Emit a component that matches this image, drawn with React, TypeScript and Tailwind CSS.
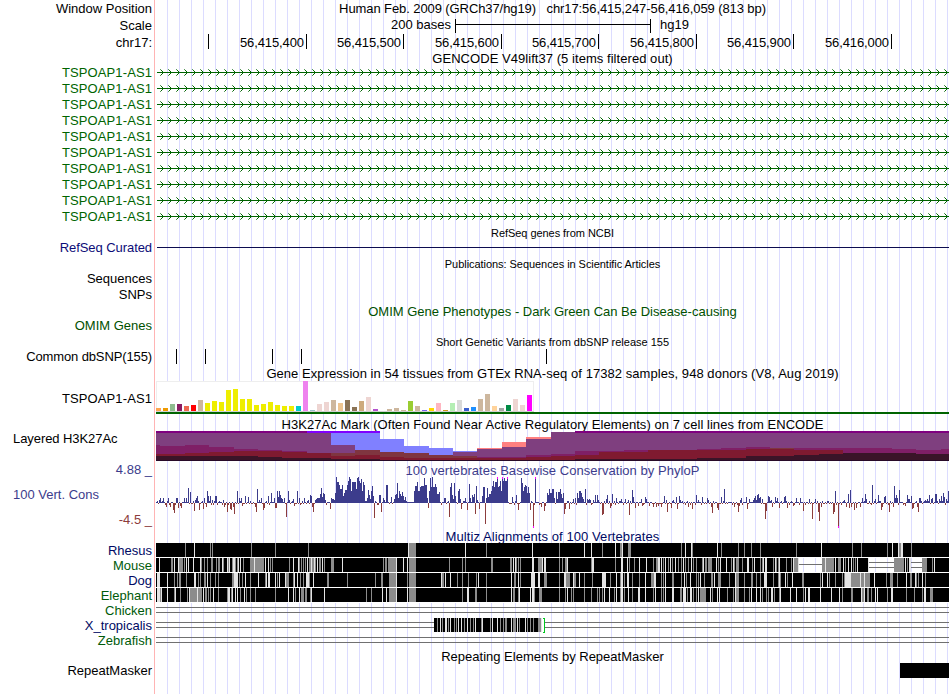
import type { ReactNode } from 'react';

const LEFT = 156;
const WIDTH = 793;

const GREEN = '#006400';

// ---- track data, positions are in track pixels ----

const snps = [176, 205, 272, 301, 546];

const rulerSteps = [
    { w: 'w-[98px]', text: '56,415,400' },
    { w: 'w-[97px]', text: '56,415,500' },
    { w: 'w-[98px]', text: '56,415,600' },
    { w: 'w-[97px]', text: '56,415,700' },
    { w: 'w-[98px]', text: '56,415,800' },
    { w: 'w-[97px]', text: '56,415,900' },
    { w: 'w-[98px]', text: '56,416,000' },
];

// height and colour of each GTEx tissue
const tissues =
    '3ffa54f 3ee9a00 78fbc8f 78b1c62 5ee6a50 6ff0000 11cdb79e 8eeee00 10eeee00 9eeee00 21eeee00 22eeee00 12eeee00 12eeee00 6eeee00 7eeee00 9eeee00 6eeee00 5eeee00 5eeee00 500cdcd 30ee82ee 19ac0cd 7eed5d2 9eed5d2 11cdb79e 8eec591 118b7355 48b7355 10cdaa7d 14eed5d2 2b452cd 0cdb79e 2cdb79e 3cdb79e 1cdb79e 109acd32 5cdb79e 17a67ee 3ffd700 8ffb6c1 1cd9b1d 8b4eeb4 11d9d9d9 33a5fcd 41e90ff 12cdb79e 17cdb79e 5ffd39b 3a6a6a6 6008b45 12eed5d2 6eed5d2 16ff00ff'
        .split(' ')
        .map((t) => ({ h: Number(t.slice(0, -6)), color: `#${t.slice(-6)}` }));

const P = '#7f3f7f';
const M = '#7f1f66';
const R = '#7f1a30';
const D = '#3a1428';
const B = '#8080ff';
const BR = '#7f3540';
const K = '#ff8080';
const LINE = '#7f007f';
const VIOLET = '#8000ff';

// each step: start x, then [top, colour] bands downwards
const histone: [number, [number, string][]][] = [
    [156, [[431, LINE], [433, P], [445, M], [454, R], [456, D]]],
    [160, [[431, LINE], [433, P], [446, M], [454, R], [456, D]]],
    [185, [[431, LINE], [433, P], [445, M], [453, R], [456, D]]],
    [209, [[431, LINE], [433, P], [447, M], [452, R], [456, D]]],
    [234, [[431, LINE], [433, P], [449, M], [451, R], [456, D]]],
    [258, [[431, LINE], [433, P], [450, M], [451, R], [457, D]]],
    [282, [[431, LINE], [433, P], [451, M], [452, R], [458, D]]],
    [307, [[431, VIOLET], [433, P], [453, R], [458, D]]],
    [331, [[431, VIOLET], [433, B], [445, P], [453, BR], [456, R], [459, D]]],
    [355, [[431, VIOLET], [433, B], [450, BR], [455, R], [459, D]]],
    [380, [[439, B], [452, BR], [457, R], [460, D]]],
    [404, [[446, B], [453, BR], [458, R], [460, D]]],
    [429, [[448, B], [455, BR], [458, R], [460, D]]],
    [453, [[451, B], [452, P], [456, BR], [458, R], [460, D]]],
    [477, [[448, K], [449, P], [457, M], [458, R], [460, D]]],
    [502, [[442, K], [447, P], [457, M], [458, R], [460, D]]],
    [526, [[437, K], [439, P], [455, M], [457, R], [460, D]]],
    [551, [[432, P], [454, M], [456, R], [460, D]]],
    [575, [[431, LINE], [433, P], [451, M], [455, R], [459, D]]],
    [599, [[431, LINE], [433, P], [451, M], [452, R], [459, D]]],
    [624, [[431, LINE], [433, P], [450, M], [452, R], [459, D]]],
    [648, [[431, LINE], [433, P], [450, R], [459, D]]],
    [697, [[431, LINE], [433, P], [449, M], [450, R], [458, D]]],
    [721, [[431, LINE], [433, P], [448, M], [450, R], [458, D]]],
    [746, [[431, LINE], [433, P], [447, M], [449, R], [456, D]]],
    [770, [[431, LINE], [433, P], [448, BR], [449, R], [456, D]]],
    [794, [[431, LINE], [433, P], [448, M], [450, R], [455, D]]],
    [819, [[431, LINE], [433, P], [448, M], [450, R], [454, D]]],
    [843, [[431, LINE], [433, P], [448, M], [453, D]]],
    [892, [[431, LINE], [433, P], [449, M], [453, D]]],
    [916, [[431, LINE], [433, P], [450, M], [454, D]]],
    [941, [[431, LINE], [433, P], [449, M], [454, D]]],
];

// x:score pairs, bases that are not listed have a score near zero
const conserved = `159:3 160:5 163:5 168:5 170:2 176:5 177:5 184:5 186:5 188:15 190:11 195:3 196:5 197:7 202:2 204:5 207:12 208:7 210:7 212:3
215:7 216:7 223:3 237:12 239:5 241:5 245:7 248:6 250:2 257:14 259:3 261:5 268:7 271:10 274:5 277:12 278:6 279:12 280:8 281:5 282:4 284:5 288:12 289:3
293:4 297:12 299:5 304:5 308:3 310:8 311:7 315:3 316:4 317:5 318:5 319:5 320:9 321:15 322:6 323:10 324:9 325:3 331:5 332:4 333:4 334:3 335:10 336:26 337:21
338:21 339:18 340:14 341:14 342:18 343:7 344:10 345:13 346:13 347:18 348:22 349:26 350:24 351:12 352:21 353:21 354:21 355:21 356:14 357:25 358:26 359:22 360:20
361:24 362:12 363:21 364:18 366:2 367:5 368:13 369:8 370:4 371:12 372:17 373:7 379:8 380:8 383:5 384:3 386:18 387:18 391:6 394:4 395:8 396:9 397:20 398:5
399:12 400:9 401:7 402:11 403:7 404:3 405:6 407:1 408:1 409:1 410:1 411:1 412:1 413:1 414:12 415:17 416:17 417:21 418:12 419:12 420:16 421:17 422:17 423:17
424:25 425:18 426:18 427:5 429:12 430:25 431:16 432:26 433:16 434:16 435:19 436:16 437:9 438:9 439:11 444:5 445:5 450:16 451:20 452:8 453:4 454:20 455:7
458:12 459:14 460:4 465:5 469:19 470:5 472:8 473:6 474:9 476:17 477:3 482:7 483:16 484:16 486:5 487:15 488:6 489:9 490:9 491:12 492:17 493:22 494:16
495:21 496:21 497:26 498:16 499:17 500:22 501:12 502:26 503:22 504:25 505:22 506:22 507:26 512:6 516:8 521:25 522:20 523:12 524:16 525:18 526:17 527:10
528:16 529:10 535:26 547:10 548:8 549:14 550:10 551:10 552:14 553:14 554:5 556:11 557:4 558:11 559:11 560:14 561:9 562:5 563:10 573:4 575:5 577:10 578:5
579:12 580:12 581:10 582:6 583:4 585:14 587:4 588:3 589:4 590:3 593:3 595:8 597:8 598:3 606:4 607:8 612:9 616:5 621:4 625:4 628:3 632:13 633:6 641:4 645:6
646:4 664:7 666:3 673:3 676:6 679:7 680:3 696:8 698:3 702:6 707:5 708:3 721:6 724:14 728:1 729:1 730:1 740:3 741:5 746:6 749:4 753:3 754:5 755:7 756:3 757:8
758:9 759:5 760:6 762:4 768:7 769:6 771:3 775:6 777:5 784:6 785:7 796:5 800:5 809:4 815:4 835:12 844:3 848:9 850:13 862:5 865:9 866:4 872:18 875:4 878:8
884:6 885:7 894:17 895:5 896:8 897:5 899:13 907:8 908:4 909:4 911:7 919:5 920:5 924:2 925:3 926:2 927:4 928:2 929:8 931:4 932:5 935:9 936:9 939:4 940:2 941:7
943:10 944:6 946:4 948:12 166:-4 169:-2 170:-4 173:-7 174:-10 178:-5 180:-3 181:-5 194:-8 199:-7 203:-6 206:-4 211:-2 213:-2 224:-4 225:-2 227:-9 228:-2
230:-6 231:-7 233:-4 234:-11 242:-3 255:-4 256:-9 263:-7 264:-5 275:-5 276:-5 286:-14 294:-3 300:-2 312:-4 313:-9 330:-6 374:-15 377:-2 381:-9 389:-1
428:-5 441:-2 449:-14 461:-6 467:-7 475:-11 479:-6 485:-21 510:-1 514:-2 518:-7 530:-7 533:-25 541:-4 544:-8 545:-3 564:-11 565:-6 569:-6 602:-12 603:-11
610:-5 611:-3 615:-2 623:-2 629:-12 635:-5 638:-3 642:-3 649:-3 653:-4 656:-4 658:-3 661:-4 667:-9 671:-5 677:-6 688:-4 692:-6 701:-2 711:-4 712:-10 717:-5
718:-7 734:-4 738:-9 739:-3 747:-6 765:-16 766:-8 772:-4 779:-5 787:-5 793:-3 803:-8 805:-2 812:-16 818:-9 819:-18 821:-4 833:-11 834:-9 838:-25 846:-4
849:-5 851:-4 854:-7 856:-5 860:-4 871:-2 881:-7 882:-4 889:-9 893:-4 905:-3 912:-6 913:-5 917:-4 918:-9`;

const scores = new Map(conserved.split(/\s+/).map((p) => p.split(':').map(Number) as [number, number]));
const nearZero = [1, -1, 1, 1, -1, 2, 1, -1, -2, 1, -1, 1, 2];

// position, g(rey) or l(ight), optional width
const rhesus = `185g 194l 210g 212g 251g 275g 308g 408l 409g7 465l 486g 532l 559g 584l 591l 602g 615l 620g2 622l 628g3 681g 685l 691l 692g 717l 721g 738g 744g 751g
760g 796g 821l 852g 861g 887g 892l 898l 899g2 901l2 911g`;
const mouse = `159l 171g2 174l 178l 179g4 184g 186l 188l 193l 200l 201g 204g 207g 211g2 216g 218g2 222l 223g 227l 228g 229l 232g 233l2 235g 237g 238l 240l 243g 250g4
254l 255g9 265l 268l 270g 272g 289g 293l 298l 299g 301g 303g 305g 307l 309g2 311l 312g2 314l 315g 317l 319g2 322l 324g 331g3 342l 383g 385g2 388g8 396l 403l
407l 409g7 449g 462g 465g 491g2 510g2 513l 515l 516g 518g 520g 532l2 538g4 542l 544l2 559g 562g 565g2 567l 591g 592l2 615g 621l2 627l 629g 634g 639l 646l 653g
656g2 658l2 661l 663g 665l 668g 670l 672g 675l 678g 681g 683l 685g 688g 691l 693g 696g 702g 703l 705g2 708g4 716l 718g 720l 726l 731g 733l 734g 736g3 742g
747l2 752g 754l 760g 762g 763l 765l2 773g 775l 776g 778g 779l 786g 791g 793l 794g4 798l 822g3 825l 826g8 835l 838g2 840g 843l 845g 848l 851l 853g 855g 857l
868l 894g9 903g 905l 907g 909l2 922g5 932g 934l`;
const dog = `157l3 167l 174g 177g 179g2 186g 194l2 198g 200g 204g2 207l 210g 215g 218g 232g2 234l4 239g 242g 245l 250g 258l 265g 266l 268l2 275l 277g 279l 285l 286g3
293g 294l 297l 300g 303g 306l 307l2 309g 313l 327g2 347g 375g 381g2 389g7 396l 407g 409g7 441l 442g2 445l 450l 457g 462g 468g 476g 478l 486g 511l 514g2 518l
520g 531l4 538l2 544g3 559g 564l2 566g4 573l 574g2 579l 584g 592g 602l 603l3 610g 616l 620g 621l2 624g 627l2 632g 639g 645l 651g3 654l2 661g 663g 665l 672g2
681g 684l 686g 690l 696g 698g 700l 704g 711g 712g 714l 718g3 729g 735l 736g3 744g 751g2 756g 760g 764l3 773g 778g 779l 780g 785l 787g 792l 802g2 820g 822l
827l 829g 835g 842g 844g 845l4 849l2 851g9 860l 861g3 864l 865g5 874l 886g 890g3 897g 906l 910g2 915l 916g 918g 922l 925g`;
const elephant = `157l3 160g 161l 167l 174g 175l 180g 187g 189l 190g7 197l 198g4 203l 205g2 208g 210g 213l 218g 227g 228l2 231g 232l 235l 237l 240g 244l 246g 250g 255g
275g 288l 293l 295g 299l 301g3 305g2 310g 311l 324l 366g 371g 382l 386l 389g7 396l 407l 409g7 462g 467l2 475g2 486g 511l 513g2 518g 519l 530l 532l2 534g 539g3
559g 565g 567l 571g 573g 584g 591g 597g 599g 602g 604l 609l 614g 616l 620g 621l2 624g 628l 632g 638l2 645l 653g 655l 661g 663g 665l 672l2 680g2 683l3 687g
690l2 693g 696g 698l 700g6 710l 712g 717l 719l 727g 733g 735l 736g3 744g 749g 751l 756l 760l 762g 766g 768g 771l2 774g 779g 780l 790l 796l 803g 805l 808l2
820l 831l 839l 842g 851g2 861l 862g2 864l 867g2 871g 875l 877l 887g 891l2 906g 914g 922g 924l2 930g3`;
const frog = `437g 440l 442g 445l2 448g 450l 454g 456g 458l 461l 464g 467l 470g 473g 475l 481g 482l 490g 492l 497l 500g 503g 505g2 511l 513g3 517l 519g 525l 527g 530g 533g 538g4 541l`;

type Block = { x: number; w: number; fill: string };

const parseBlocks = (text: string): Block[] =>
    text.split(/\s+/).map((t) => {
        const [, x, tone, w] = t.match(/(\d+)([gl])(\d*)/)!;
        return { x: Number(x), w: Number(w || 1), fill: tone === 'g' ? '#8c8c8c' : '#e4e4e4' };
    });

// ---- building blocks ----

function Track({ top, height, children }: { top: number; height: number; children?: ReactNode }) {
    return (
        <svg className="block" width={WIDTH} height={height} viewBox={`${LEFT} ${top} ${WIDTH} ${height}`} shapeRendering="crispEdges">
            {children}
        </svg>
    );
}

interface RowProps {
    height: string;
    label?: ReactNode;
    labelClass?: string;
    children?: ReactNode;
}

function Row({ height, label, labelClass = '', children }: RowProps) {
    return (
        <div className={`flex ${height}`}>
            <div className={`mr-px w-[155px] shrink-0 border-r border-[#ffb4b4] pr-[2px] text-right whitespace-pre ${labelClass}`}>{label}</div>
            <div className="w-[793px] shrink-0 bg-[repeating-linear-gradient(90deg,transparent_0px,transparent_11px,#dcdcff_11px,#dcdcff_12px)]">
                {children}
            </div>
        </div>
    );
}

function Title({ className = '', children }: { className?: string; children: ReactNode }) {
    return <div className={`text-center whitespace-pre ${className}`}>{children}</div>;
}

function GeneRow({ top }: { top: number }) {
    const y = top + 7;
    const arrows = Array.from({ length: 99 }, (_, i) => 162 + i * 8);
    return (
        <Row height="h-4" label="TSPOAP1-AS1" labelClass="tracking-[0.1px] text-[#006400]">
            <Track top={top} height={16}>
                <rect x={157} y={y} width={792} height={1} fill={GREEN} />
                {arrows.map((x) => (
                    <g key={x} fill={GREEN}>
                        <path d={`M${x} ${y - 1}h1v1h-1z M${x - 1} ${y - 2}h1v1h-1z M${x} ${y + 1}h1v1h-1z M${x - 1} ${y + 2}h1v1h-1z`} />
                        <path opacity={0.65} d={`M${x - 2} ${y - 3}h1v1h-1z M${x - 2} ${y + 3}h1v1h-1z`} />
                    </g>
                ))}
            </Track>
        </Row>
    );
}

function Expression() {
    return (
        <Track top={381} height={35}>
            <rect x={156} y={381} width={378} height={31} fill="#eeeeee" />
            <rect x={157} y={382} width={376} height={29} fill="#ffffff" />
            <rect x={156} y={411} width={378} height={1} fill="#d2d2d2" />
            {tissues.map((t, i) => (
                <rect key={i} x={156 + i * 7} y={411 - t.h} width={5} height={t.h} fill={t.color} />
            ))}
            <rect x={156} y={412} width={793} height={2} fill={GREEN} />
        </Track>
    );
}

function Histone() {
    return (
        <Track top={431} height={31}>
            {histone.map(([x, bands], i) => {
                const end = histone[i + 1]?.[0] ?? 949;
                return bands.map(([y, fill]) => <rect key={`${x}-${y}`} x={x} y={y} width={end - x} height={461 - y} fill={fill} />);
            })}
            <rect x={156} y={460} width={793} height={1} fill="#280a28" />
        </Track>
    );
}

function Conservation() {
    return (
        <Track top={477} height={52}>
            {Array.from({ length: WIDTH }, (_, i) => {
                const x = LEFT + i;
                const s = scores.get(x) ?? nearZero[(x * 31 + (x >> 2)) % nearZero.length];
                const clipped = s === -25 || [497, 502, 507, 535].includes(x);
                return (
                    <g key={x}>
                        <rect x={x} y={s > 0 ? 503 - s : 503} width={1} height={Math.abs(s)} fill={s > 0 ? '#3c3c8c' : '#8c3c3c'} />
                        {clipped && <rect x={x} y={s > 0 ? 477 : 526} width={1} height={2} fill="#ff00ff" />}
                    </g>
                );
            })}
        </Track>
    );
}

function Alignment({ top, data, gaps = false }: { top: number; data: string; gaps?: boolean }) {
    return (
        <Track top={top} height={15}>
            <rect x={156} y={top} width={793} height={15} fill="#ffffff" />
            <rect x={156} y={top} width={793} height={14} fill="#000000" />
            {parseBlocks(data).map((b) => (
                <rect key={b.x} x={b.x} y={top} width={b.w} height={14} fill={b.fill} />
            ))}
            {gaps && (
                <>
                    <path fill="#ffffff" d={`M799 ${top}h23v14h-23z M869 ${top}h25v14h-25z M911 ${top}h11v14h-11z`} />
                    <path fill="#dcdcff" d={`M803 ${top}h1v14h-1z M815 ${top}h1v14h-1z M875 ${top}h1v14h-1z M887 ${top}h1v14h-1z M911 ${top}h1v14h-1z`} />
                    <path
                        fill="#707070"
                        d={`M799 ${top + 6}h23v1h-23z M869 ${top + 4}h25v1h-25z M869 ${top + 9}h25v1h-25z M911 ${top + 4}h11v1h-11z M911 ${top + 9}h11v1h-11z`}
                    />
                </>
            )}
        </Track>
    );
}

function Unaligned({ top, children }: { top: number; children?: ReactNode }) {
    return (
        <Track top={top} height={15}>
            <rect x={156} y={top + 4} width={793} height={1} fill="#707070" />
            <rect x={156} y={top + 9} width={793} height={1} fill="#707070" />
            {children}
        </Track>
    );
}

export default function App() {
    return (
        <div className="h-[694px] w-[950px] overflow-hidden bg-white font-['Liberation_Sans',Arial,sans-serif] text-[13px] leading-[15px] text-black">
            <Row height="h-[17px]" label="Window Position" labelClass="pt-px">
                <Title className="pt-px tracking-[-0.09px]">{'Human Feb. 2009 (GRCh37/hg19)   chr17:56,415,247-56,416,059 (813 bp)'}</Title>
            </Row>
            <Row height="h-[17px]" label="Scale" labelClass="pt-px">
                <div className="flex">
                    <div className="w-[296px] pr-px text-right">200 bases</div>
                    <div className="mt-[2px] ml-[3px] flex h-[14px] w-[196px] items-start border-x border-black">
                        <div className="mt-[5px] h-px w-full bg-black" />
                    </div>
                    <div className="ml-[9px]">hg19</div>
                </div>
            </Row>
            <Row height="h-[17px]" label="chr17:" labelClass="pt-px">
                <div className="flex h-[15px]">
                    <div className="w-[53px] border-r border-black" />
                    {rulerSteps.map((s) => (
                        <div key={s.text} className={`shrink-0 border-r border-black pt-px pr-[2px] text-right tracking-[-0.1px] ${s.w}`}>
                            {s.text}
                        </div>
                    ))}
                </div>
            </Row>

            <Row height="h-[14px]">
                <Title className="tracking-[0.05px]">GENCODE V49lift37 (5 items filtered out)</Title>
            </Row>
            {Array.from({ length: 10 }, (_, i) => (
                <GeneRow key={i} top={65 + i * 16} />
            ))}

            <Row height="h-[15px]">
                <Title className="pt-px text-[11px] tracking-[-0.05px]">RefSeq genes from NCBI</Title>
            </Row>
            <Row height="h-4" label="RefSeq Curated" labelClass="tracking-[-0.07px] text-[#0c0c78]">
                <Track top={240} height={16}>
                    <rect x={157} y={247} width={792} height={1} fill="#0c0c50" />
                </Track>
            </Row>

            <Row height="h-[15px]">
                <Title className="pt-px text-[11px] tracking-[-0.05px]">Publications: Sequences in Scientific Articles</Title>
            </Row>
            <Row height="h-4" label="Sequences" />
            <Row height="h-4" label="SNPs" />

            <Row height="h-[15px]">
                <Title className="pt-px text-[#005000]">OMIM Gene Phenotypes - Dark Green Can Be Disease-causing</Title>
            </Row>
            <Row height="h-4" label="OMIM Genes" labelClass="text-[#005000]" />

            <Row height="h-[15px]">
                <Title className="pt-px text-[11px]">Short Genetic Variants from dbSNP release 155</Title>
            </Row>
            <Row height="h-4" label="Common dbSNP(155)" labelClass="tracking-[-0.12px]">
                <Track top={349} height={16}>
                    {snps.map((x) => (
                        <rect key={x} x={x} y={349} width={1} height={15} fill="#000000" />
                    ))}
                </Track>
            </Row>

            <Row height="h-4">
                <Title className="pt-px tracking-[0.055px]">Gene Expression in 54 tissues from GTEx RNA-seq of 17382 samples, 948 donors (V8, Aug 2019)</Title>
            </Row>
            <Row height="h-[35px]" label="TSPOAP1-AS1" labelClass="pt-[10px] tracking-[0.1px]">
                <Expression />
            </Row>

            <Row height="h-[15px]">
                <Title className="pt-px tracking-[0.05px]">H3K27Ac Mark (Often Found Near Active Regulatory Elements) on 7 cell lines from ENCODE</Title>
            </Row>
            <Row height="h-[31px]" label={<div className="pl-[13px] text-left tracking-[-0.07px]">Layered H3K27Ac</div>}>
                <Histone />
            </Row>

            <Row height="h-[15px]" label="4.88 _" labelClass="text-[#3c3c8c]">
                <Title className="pt-px tracking-[0.04px] text-[#3c3c8c]">100 vertebrates Basewise Conservation by PhyloP</Title>
            </Row>
            <Row
                height="h-[52px]"
                labelClass="flex flex-col pt-[10px]"
                label={
                    <>
                        <div className="pl-[13px] text-left text-[#3c3c8c]">100 Vert. Cons</div>
                        <div className="pt-[10px] text-[#8c3c3c]">-4.5 _</div>
                    </>
                }
            >
                <Conservation />
            </Row>

            <Row height="h-[14px]">
                <Title className="tracking-[0.08px] text-[#000a64]">Multiz Alignments of 100 Vertebrates</Title>
            </Row>
            <Row height="h-[15px]" label="Rhesus" labelClass="text-[#000a64]">
                <Alignment top={543} data={rhesus} />
            </Row>
            <Row height="h-[15px]" label="Mouse" labelClass="text-[#005a0a]">
                <Alignment top={558} data={mouse} gaps />
            </Row>
            <Row height="h-[15px]" label="Dog" labelClass="text-[#000a64]">
                <Alignment top={573} data={dog} />
            </Row>
            <Row height="h-[15px]" label="Elephant" labelClass="text-[#005a0a]">
                <Alignment top={588} data={elephant} />
            </Row>
            <Row height="h-[15px]" label="Chicken" labelClass="text-[#005a0a]">
                <Unaligned top={603} />
            </Row>
            <Row height="h-[15px]" label="X_tropicalis" labelClass="text-[#000a64]">
                <Unaligned top={618}>
                    <rect x={434} y={618} width={108} height={14} fill="#000000" />
                    {parseBlocks(frog).map((b) => (
                        <rect key={b.x} x={b.x} y={618} width={b.w} height={14} fill={b.fill} />
                    ))}
                    <rect x={542} y={618} width={2} height={14} fill="#ffffff" />
                    <path fill="#00c81e" d="M543 618h2v15h-2v-1h1v-13h-1z" />
                </Unaligned>
            </Row>
            <Row height="h-[15px]" label="Zebrafish" labelClass="text-[#005a0a]">
                <Unaligned top={633} />
            </Row>

            <Row height="h-[15px]">
                <Title className="pt-px">Repeating Elements by RepeatMasker</Title>
            </Row>
            <Row height="h-[31px]" label="RepeatMasker">
                <Track top={663} height={31}>
                    <rect x={900} y={663} width={49} height={15} fill="#000000" />
                </Track>
            </Row>
        </div>
    );
}
